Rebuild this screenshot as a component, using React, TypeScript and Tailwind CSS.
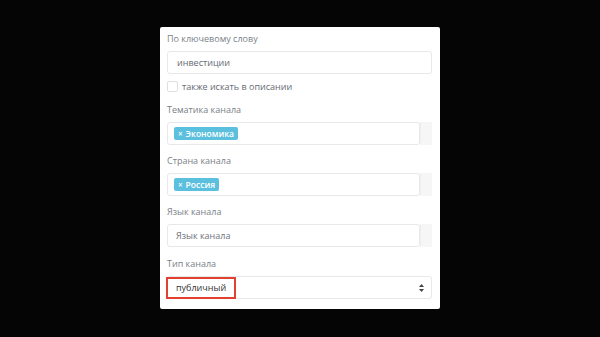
import React from "react";

const Label = ({ children }: { children: React.ReactNode }) => (
  <div className="h-[12px] leading-[12px] text-[9px] text-[#7a7f87] mb-[6px]">{children}</div>
);

const Tag = ({ text }: { text: string }) => (
  <span className="inline-flex items-center h-[13px] px-[4px] rounded-[2px] bg-[#5bbfde] text-white text-[8.5px] leading-[13px] font-semibold">
    <span className="mr-[3px] text-[8px]">×</span>
    {text}
  </span>
);

const TagBox = ({ tag, placeholder }: { tag?: string; placeholder?: string }) => (
  <div className="flex h-[23px]">
    <div className="flex-1 flex items-center border border-[#e6e8eb] rounded-[3px] pl-[6px] bg-white">
      {tag ? <Tag text={tag} /> : <span className="text-[9px] text-[#6f747b] pl-[2px]">{placeholder}</span>}
    </div>
    <div className="w-[12px] bg-[#f6f6f7] border-l border-[#efefef]" />
  </div>
);

const App = () => {
  return (
    <div
      className="w-[600px] h-[337px] bg-[#050505] flex justify-center pt-[27px]"
      style={{ fontFamily: '"Open Sans", "Noto Sans", sans-serif' }}
    >
      <div className="w-[280px] h-[282px] bg-white rounded-[2px] pl-[7px] pr-[8px] pt-[6px]">
        <Label>По ключевому слову</Label>
        <div className="h-[23px] border border-[#e6e8eb] rounded-[3px] flex items-center pl-[9px] text-[9px] text-[#666b72]">
          инвестиции
        </div>
        <div className="flex items-center mt-[7px] h-[11px]">
          <div className="w-[11px] h-[11px] border border-[#dcdfe3] rounded-[2px]" />
          <span className="ml-[4px] text-[9px] text-[#666b72]">также искать в описании</span>
        </div>
        <div className="mt-[12px]">
          <Label>Тематика канала</Label>
          <TagBox tag="Экономика" />
        </div>
        <div className="mt-[10px]">
          <Label>Страна канала</Label>
          <TagBox tag="Россия" />
        </div>
        <div className="mt-[10px]">
          <Label>Язык канала</Label>
          <TagBox placeholder="Язык канала" />
        </div>
        <div className="mt-[11px]">
          <Label>Тип канала</Label>
          <div className="relative h-[23px] border border-[#e6e8eb] rounded-[3px] flex items-center pl-[8px] text-[9px] text-[#333]">
            публичный
            <div className="absolute left-[-2px] top-0 w-[70px] h-[22px] border-2 border-[#e2412f]" />
            <svg className="absolute right-[7px] top-[7px]" width="5" height="8" viewBox="0 0 5 8">
              <path d="M2.5 0 L5 3 L0 3 Z" fill="#444" />
              <path d="M2.5 8 L5 5 L0 5 Z" fill="#444" />
            </svg>
          </div>
        </div>
      </div>
    </div>
  );
};

export default App;
